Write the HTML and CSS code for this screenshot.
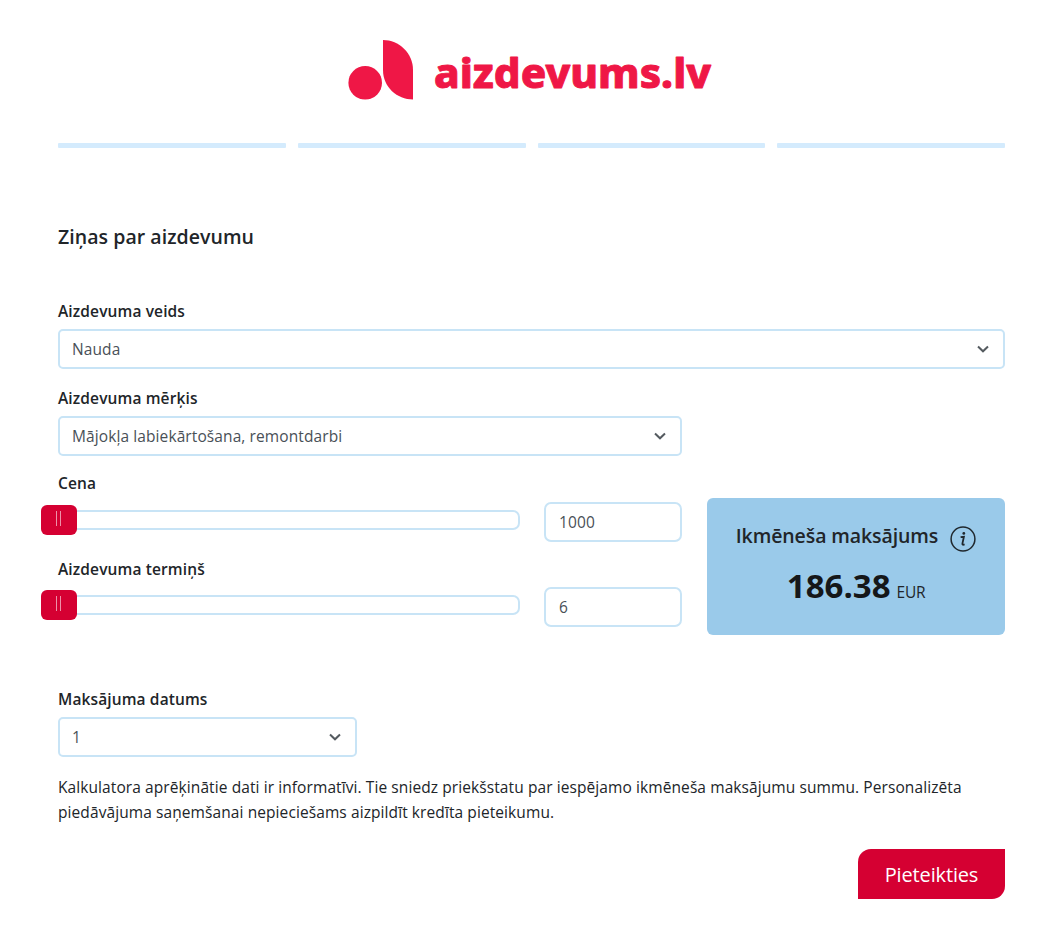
FILE: index.html
```html
<!doctype html>
<html lang="lv">
  <head>
    <meta charset="UTF-8" />
    <meta name="viewport" content="width=device-width, initial-scale=1.0" />
    <title>aizdevums.lv</title>
    <link rel="stylesheet" href="styles.css">
  </head>

  <body>
    <div class="page">
      <header class="logo">
        <svg width="366" height="62" viewBox="0 0 366 62" role="img" aria-label="aizdevums.lv">
          <g class="logo-mark">
            <circle cx="17.2" cy="43.8" r="16.8" />
            <path d="M35 1 C51 1 65 14 65 31 V60.5 C49 60.5 35 48 35 31 Z" />
          </g>
          <text class="logo-text" x="86" y="48.5" textLength="277" lengthAdjust="spacingAndGlyphs">aizdevums.lv</text>
        </svg>
      </header>

      <div class="steps">
        <span class="step"></span>
        <span class="step"></span>
        <span class="step"></span>
        <span class="step"></span>
      </div>

      <form class="form">
        <h1 class="title">Ziņas par aizdevumu</h1>

        <div class="field">
          <label class="label" for="type">Aizdevuma veids</label>
          <select class="control select" id="type">
            <option>Nauda</option>
          </select>
        </div>

        <div class="calculator">
          <div class="calculator-inputs">
            <div class="field">
              <label class="label" for="purpose">Aizdevuma mērķis</label>
              <select class="control select" id="purpose">
                <option>Mājokļa labiekārtošana, remontdarbi</option>
              </select>
            </div>
            <div class="field field-price">
              <label class="label" for="price">Cena</label>
              <div class="slider-row">
                <div class="slider"><span class="handle"></span></div>
                <input class="control number" id="price" type="text" value="1000">
              </div>
            </div>
            <div class="field field-term">
              <label class="label" for="term">Aizdevuma termiņš</label>
              <div class="slider-row">
                <div class="slider"><span class="handle"></span></div>
                <input class="control number" id="term" type="text" value="6">
              </div>
            </div>
          </div>

          <div class="payment">
            <div class="payment-head">
              <span class="payment-title">Ikmēneša maksājums</span>
              <svg class="info" width="26" height="26" viewBox="0 0 26 26" fill="none">
                <circle cx="13" cy="13" r="11.9" stroke="#20282e" stroke-width="1.5" />
                <path d="M10.6 11.2 L13.9 10.8 L12.4 17.6 Q12.1 19.4 14.6 18.4" stroke="#20282e" stroke-width="1.8" />
                <circle cx="13.8" cy="7.4" r="1.4" fill="#20282e" />
              </svg>
            </div>
            <div class="payment-sum">
              <strong class="amount">186.38</strong>
              <span class="currency">EUR</span>
            </div>
          </div>
        </div>

        <div class="field field-date">
          <label class="label" for="date">Maksājuma datums</label>
          <select class="control select" id="date">
            <option>1</option>
          </select>
        </div>

        <p class="note">
          Kalkulatora aprēķinātie dati ir informatīvi. Tie sniedz priekšstatu par iespējamo ikmēneša maksājumu summu. Personalizēta
          piedāvājuma saņemšanai nepieciešams aizpildīt kredīta pieteikumu.
        </p>

        <div class="actions">
          <button class="submit" type="button">Pieteikties</button>
        </div>
      </form>
    </div>
  </body>
</html>
```
FILE: styles.css
```css
* {
  box-sizing: border-box;
}
body {
  margin: 0;
  background: #fff;
  color: #212529;
  font-family: "Open Sans", "Noto Sans", sans-serif;
  font-size: 15.5px;
  line-height: 24px;
}
.page {
  padding: 39px 58px 0;
}
.logo {
  display: flex;
  padding-left: 290px;
}
.logo-mark,
.logo-text {
  fill: #ef1746;
}
.logo-text {
  font-family: "Noto Sans", sans-serif;
  font-size: 41.5px;
  font-weight: 800;
  stroke: #ef1746;
  stroke-width: 0.9px;
  stroke-linejoin: round;
}
.steps {
  display: grid;
  grid-template-columns: repeat(4, 1fr);
  gap: 12px;
  margin-top: 42px;
}
.step {
  height: 5px;
  border-radius: 1px;
  background: #d4ebfd;
}
.title {
  margin: 77px 0 50px;
  font-size: 19.5px;
  font-weight: 600;
  line-height: 24px;
  letter-spacing: 0.05px;
}
.field {
  display: flex;
  flex-direction: column;
  align-items: flex-start;
}
.label {
  margin-bottom: 6px;
  font-weight: 600;
  font-size: 15.5px;
  letter-spacing: 0.12px;
}
.control {
  width: 100%;
  height: 40px;
  padding: 0 13px;
  border: 2px solid #c8e4f6;
  border-radius: 5px;
  background-color: #fff;
  color: #495057;
  font: inherit;
  letter-spacing: 0.1px;
}
/* the native arrow is replaced by a chevron */
.select {
  appearance: none;
  padding: 0 12px;
  background-image: url("data:image/svg+xml,%3Csvg xmlns='http://www.w3.org/2000/svg' viewBox='0 0 12 8'%3E%3Cpath d='M1 1.5l5 4.8 5-4.8' fill='none' stroke='%23555b60' stroke-width='2'/%3E%3C/svg%3E");
  background-repeat: no-repeat;
  background-position: right 14px center;
  background-size: 12px 8px;
}
.calculator {
  display: flex;
  align-items: flex-start;
  justify-content: space-between;
  margin-top: 17px;
}
.calculator-inputs {
  width: 624px;
}
.field-price,
.field-term {
  margin-top: 15px;
}
.field-price .label {
  margin-bottom: 7px;
}
.slider-row {
  display: flex;
  width: 100%;
  gap: 24px;
}
.slider {
  display: flex;
  align-items: center;
  flex: 1;
  height: 20px;
  margin-top: 8px;
  border: 2px solid #c8e4f6;
  border-left: 0;
  border-radius: 0 7px 7px 0;
}
.handle {
  display: flex;
  align-items: center;
  justify-content: center;
  width: 36px;
  height: 30px;
  margin-left: -17px;
  border-radius: 6px;
  background: #d50032;
}
.handle::before {
  width: 3px;
  height: 15px;
  margin: -3px 2px 0 0;
  border: solid #ed91a8;
  border-width: 0 1px;
  content: "";
}
.number {
  width: 138px;
  border-radius: 7px;
}
.payment {
  width: 298px;
  height: 137px;
  margin-top: 112px;
  padding-top: 26px;
  border-radius: 6px;
  background: #9acaea;
}
.payment-head {
  display: flex;
  align-items: flex-start;
  justify-content: center;
  gap: 12px;
}
.payment-title {
  font-size: 19.5px;
  font-weight: 600;
  letter-spacing: -0.1px;
}
.info {
  margin-top: 2px;
}
.payment-sum {
  display: flex;
  align-items: baseline;
  justify-content: center;
  gap: 6px;
  margin-top: 14px;
}
.amount {
  color: #151719;
  font-size: 33px;
  line-height: 40px;
}
.currency {
  letter-spacing: -0.3px;
}
.field-date {
  width: 299px;
  margin-top: 52px;
}
.note {
  margin: 18px 0 0;
  line-height: 25px;
  letter-spacing: 0.09px;
}
.actions {
  display: flex;
  justify-content: flex-end;
  margin-top: 24px;
}
.submit {
  width: 147px;
  height: 50px;
  padding: 2px 0 0;
  border: 0;
  border-radius: 13px 0;
  background: #d50032;
  color: #fff;
  font: inherit;
  font-size: 20px;
  letter-spacing: -0.15px;
}
```
